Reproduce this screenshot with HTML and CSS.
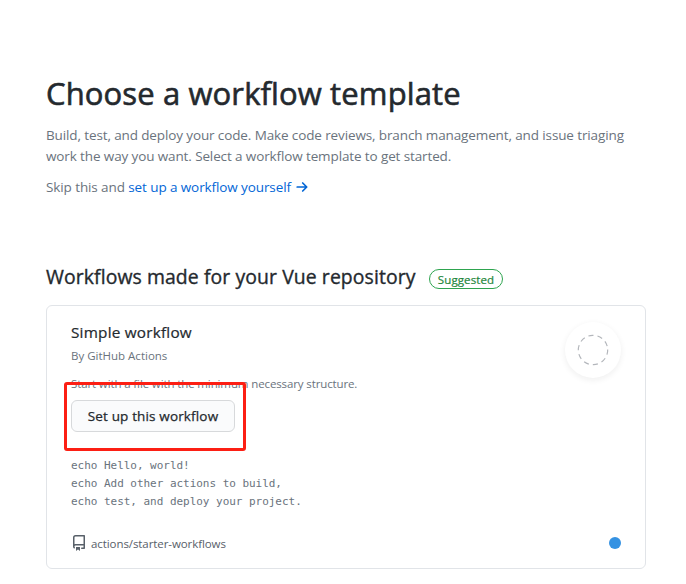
FILE: index.html
```html
<!DOCTYPE html>
<html lang="en">
<head>
<meta charset="utf-8">
<title>Choose a workflow template</title>
<link rel="stylesheet" href="styles.css">
</head>
<body>
<main class="page">
  <h1 class="title">Choose a workflow template</h1>
  <p class="lead">Build, test, and deploy your code. Make code reviews, branch management, and issue triaging<br>work the way you want. Select a workflow template to get started.</p>
  <p class="skip"><span>Skip this and <a class="link" href="#">set up a workflow yourself</a></span><svg class="arrow" viewBox="0 0 16 16" width="16" height="16"><path fill="none" stroke="currentColor" stroke-width="1.7" stroke-linecap="round" stroke-linejoin="round" d="M3.2 8h9.4M8.7 4l4 4-4 4"/></svg></p>
  <div class="section-head">
    <h2 class="section-title">Workflows made for your Vue repository</h2>
    <span class="label">Suggested</span>
  </div>
  <section class="card">
    <div class="card-top">
      <div class="info">
        <h3 class="name">Simple workflow</h3>
        <p class="by">By GitHub Actions</p>
        <p class="desc">Start with a file with the minimum necessary structure.</p>
      </div>
      <div class="badge"><svg width="32" height="32" viewBox="0 0 32 32"><circle cx="16" cy="16" r="14.7" fill="none" stroke="#b3b6bb" stroke-width="1.2" stroke-dasharray="5.2 4.036" transform="rotate(-2 16 16)"/></svg></div>
    </div>
    <div class="action">
      <button class="btn">Set up this workflow</button>
      <div class="highlight"></div>
    </div>
    <pre class="code">echo Hello, world!
echo Add other actions to build,
echo test, and deploy your project.</pre>
    <div class="card-foot">
      <svg class="repo" viewBox="0 0 16 16" width="16" height="16"><path fill="currentColor" fill-rule="evenodd" d="M2 2.5A2.5 2.5 0 014.5 0h8.75a.75.75 0 01.75.75v12.5a.75.75 0 01-.75.75h-2.5a.75.75 0 110-1.5h1.75v-2h-8a1 1 0 00-.714 1.7.75.75 0 01-1.072 1.05A2.495 2.495 0 012 11.5v-9zm10.5-1V9h-8c-.356 0-.694.074-1 .208V2.5a1 1 0 011-1h8zM5 12.25v3.25a.25.25 0 00.4.2l1.45-1.087a.25.25 0 01.3 0L8.6 15.7a.25.25 0 00.4-.2v-3.25a.25.25 0 00-.25-.25h-3.5a.25.25 0 00-.25.25z"/></svg>
      <span class="repo-name">actions/starter-workflows</span>
      <span class="dot"></span>
    </div>
  </section>
</main>
</body>
</html>
```
FILE: styles.css
```css
* { box-sizing: border-box; }
body {
  margin: 0;
  background: #fff;
  color: #24292e;
  font-family: "Open Sans", "Noto Sans", sans-serif;
  overflow: hidden;
}
h1, h2, h3, p, pre { margin: 0; }
h1, h2, h3, p { white-space: nowrap; }
.page { width: 600px; margin-left: 46px; padding-top: 69px; }
.title { font-size: 31px; line-height: 48px; font-weight: 500; letter-spacing: .12px; -webkit-text-stroke: .6px currentColor; }
.lead { margin-top: 8px; font-size: 13.5px; line-height: 21px; letter-spacing: -.12px; color: #6a737d; }
.skip { display: flex; align-items: center; margin-top: 9px; height: 21px; font-size: 13.5px; letter-spacing: -.1px; color: #6a737d; }
.link { color: #0366d6; text-decoration: none; }
.arrow { margin-left: 3px; color: #0366d6; }
.section-head { display: flex; align-items: center; height: 30px; margin-top: 65px; }
.section-title { font-size: 19.4px; font-weight: 500; width: 383px; line-height: 30px; letter-spacing: .09px; -webkit-text-stroke: .35px currentColor; }
.label {
  display: flex; align-items: center; justify-content: center;
  width: 74px; height: 20px; margin-top: 4px;
  border: 1px solid #2ea44f; border-radius: 10px;
  font-size: 11.5px; font-weight: 500; color: #22863a; letter-spacing: .1px; -webkit-text-stroke: .2px currentColor;
}
.card { height: 264px; margin-top: 13px; padding: 15px 24px; border: 1px solid #e1e4e8; border-radius: 6px; }
.card-top { display: flex; justify-content: space-between; height: 79px; }
.name { font-size: 15.3px; line-height: 22px; font-weight: 500; letter-spacing: .22px; -webkit-text-stroke: .22px currentColor; }
.by { margin-top: 4px; font-size: 11.5px; line-height: 18px; color: #6a737d; }
.desc { margin-top: 10px; font-size: 11.5px; line-height: 18px; letter-spacing: -.12px; color: #6a737d; }
.badge {
  display: flex; align-items: center; justify-content: center;
  width: 56px; height: 56px; margin-top: 1px; border-radius: 50%; background: #fff;
  box-shadow: 0 2px 6px rgba(27, 31, 35, .07);
}
.action { position: relative; height: 32px; }
.btn {
  width: 164px; height: 32px; padding: 0; border: 1px solid #d7d9db; border-radius: 6px;
  background: #fafbfc; color: #24292e; font: 500 13.5px "Open Sans", "Noto Sans", sans-serif; white-space: nowrap;
  letter-spacing: .15px; -webkit-text-stroke: .25px currentColor;
}
.highlight { position: absolute; left: -7px; top: -18px; width: 182px; height: 69px; border: 3px solid #fc1f14; border-radius: 3px; }
.code { margin-top: 25px; font: 11px/18px "DejaVu Sans Mono", monospace; letter-spacing: -.03px; color: #6a737d; }
.card-foot { display: flex; align-items: center; height: 18px; margin-top: 23px; font-size: 11.5px; letter-spacing: -.08px; color: #586069; }
.repo-name { margin-left: 4px; }
.dot { width: 12px; height: 12px; margin-left: auto; border-radius: 50%; background: #3592e2; }
```
